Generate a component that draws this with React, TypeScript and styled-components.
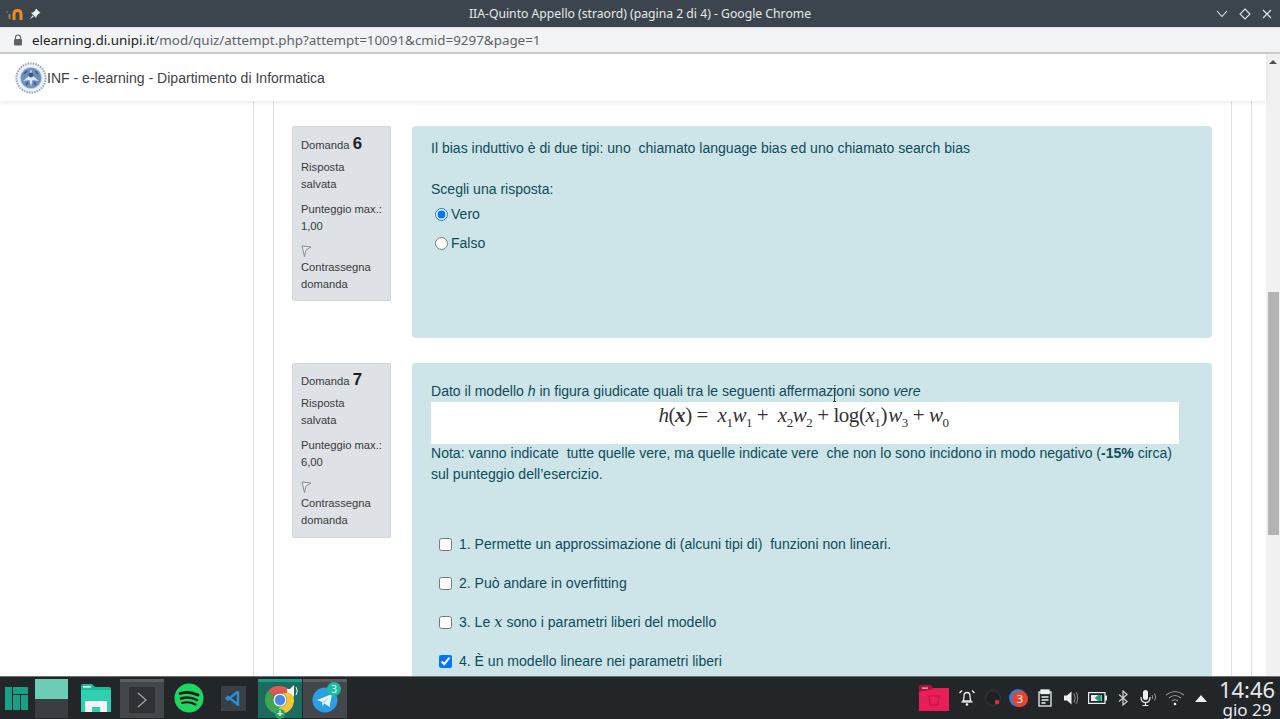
import React from 'react'
import styled, { createGlobalStyle } from 'styled-components'

const GlobalStyle = createGlobalStyle`
    html, body {
        margin: 0;
        padding: 0;
        height: 100%;
        overflow: hidden;
        background: #fff;
    }
    * {
        box-sizing: border-box;
    }
`

const questionSix = ['Vero', 'Falso']
const questionSeven = [
    { text: <>1. Permette un approssimazione di (alcuni tipi di)&nbsp; funzioni non lineari.</>, checked: false },
    { text: <>2. Può andare in overfitting</>, checked: false },
    { text: <>3. Le <MathVar>x</MathVar> sono i parametri liberi del modello</>, checked: false },
    { text: <>4. È un modello lineare nei parametri liberi</>, checked: true },
]

function MathVar({ children }: { children: React.ReactNode }) {
    return <MathItalic>{children}</MathItalic>
}

const Flag = () => (
    <svg width="11" height="12" viewBox="0 0 11 12" fill="none">
        <path d="M1 1 L10 2 L5 5 L3.5 11.5 Z" stroke="#8a8d90" strokeWidth="1" fill="#e9eaec" />
    </svg>
)

const QuestionInfo = ({ number, max, top }: { number: number; max: string; top: number }) => (
    <Info $top={top}>
        <InfoTitle>Domanda <InfoNumber>{number}</InfoNumber></InfoTitle>
        <InfoBlock>Risposta<br />salvata</InfoBlock>
        <InfoBlock>Punteggio max.:<br />{max}</InfoBlock>
        <FlagRow><Flag /></FlagRow>
        <div>Contrassegna<br />domanda</div>
    </Info>
)

const Seal = () => (
    <svg width="32" height="32" viewBox="0 0 32 32">
        <circle cx="16" cy="16" r="15.5" fill="#eef1f6" />
        <circle cx="16" cy="16" r="14.6" fill="none" stroke="#8ea3c4" strokeWidth="2" strokeDasharray="1.4 1.2" />
        <circle cx="16" cy="16" r="10.5" fill="#6f8dbb" />
        <circle cx="16" cy="16" r="10.5" fill="none" stroke="#b6c5dc" strokeWidth="1.2" strokeDasharray="1 1" />
        <path d="M16 7 L18 14 L24 19 L17.5 18 L16 25 L14.5 18 L8 19 L14 14 Z" fill="#dfe6f0" />
        <circle cx="16" cy="13" r="2.4" fill="#2f5792" />
        <path d="M9 12 L12 9 M23 12 L20 9 M11 23 L13 20 M21 23 L19 20" stroke="#34598f" strokeWidth="1.4" />
    </svg>
)

const ManjaroLogo = () => (
    <svg width="23" height="23" viewBox="0 0 23 23" fill="#16a085">
        <rect x="0" y="0" width="7" height="23" />
        <rect x="8" y="0" width="15" height="7" />
        <rect x="8" y="8" width="7" height="15" />
        <rect x="16" y="8" width="7" height="15" />
    </svg>
)

const FilesIcon = () => (
    <svg width="32" height="32" viewBox="0 0 32 32">
        <path d="M1 4 Q1 2 3 2 L12 2 L15 5 L29 5 Q31 5 31 7 L31 30 L1 30 Z" fill="#1abc9c" />
        <rect x="1" y="8" width="30" height="22" fill="#2fd0b0" />
        <rect x="3" y="4" width="8" height="1.6" fill="#dff7f1" />
        <path d="M5 30 L5 19 L27 19 L27 30 L20 30 L20 25 L12 25 L12 30 Z" fill="#f2f4f5" />
    </svg>
)

const ChromeIcon = () => (
    <svg width="30" height="30" viewBox="0 0 30 30">
        <path d="M15 1 A14 14 0 0 1 27.1 8 L15 8 A7 7 0 0 0 8.9 11.5 L3 6 A14 14 0 0 1 15 1 Z" fill="#e2574c" />
        <path d="M3 6 L8.9 11.5 A7 7 0 0 0 15 22 L9.5 28 A14 14 0 0 1 3 6 Z" fill="#3fa650" />
        <path d="M27.1 8 A14 14 0 0 1 9.5 28 L15 22 A7 7 0 0 0 15 8 Z" fill="#f6c533" />
        <circle cx="15" cy="15" r="6.6" fill="#fff" />
        <circle cx="15" cy="15" r="5.2" fill="#4a86e8" />
    </svg>
)

const TelegramIcon = () => (
    <svg width="26" height="26" viewBox="0 0 26 26">
        <circle cx="13" cy="13" r="12.5" fill="#2a9fe4" />
        <path d="M5 13 L20 7 L17.5 20 L12.5 16.5 L10.5 19 L10 15 Z" fill="#e8f5fc" />
        <path d="M10 15 L17 10 L12.5 16.5 Z" fill="#bcdcf0" />
    </svg>
)

const TrayIcons = () => (
    <Tray>
        <TrashFolder>
            <svg width="30" height="26" viewBox="0 0 30 26">
                <path d="M0 2 Q0 0 2 0 L11 0 L14 3 L30 3 L30 26 L0 26 Z" fill="#e91e57" />
                <path d="M0 0 L12 0 L14 4 L0 7 Z" fill="#a8123c" />
                <rect x="3" y="2.5" width="6" height="1.2" fill="#f4c6d4" />
                <path d="M10 11 L20 11 L19 20 L11 20 Z" fill="none" stroke="#bc1745" strokeWidth="1.2" />
            </svg>
        </TrashFolder>
        <TraySlot>
            <svg width="18" height="18" viewBox="0 0 18 18" fill="none" stroke="#eceff1" strokeWidth="1.3">
                <path d="M5 12 Q6 10 6 7 Q6 3.5 9 3.5 Q12 3.5 12 7 Q12 10 13 12 Z" />
                <path d="M3.5 13 L14.5 13" />
                <path d="M1.5 4 L4 1.5 M16.5 4 L14 1.5" />
                <circle cx="9" cy="15.5" r="1.3" fill="#eceff1" stroke="none" />
            </svg>
        </TraySlot>
        <TraySlot>
            <svg width="18" height="18" viewBox="0 0 18 18">
                <circle cx="9" cy="9" r="7.5" fill="#1f2124" stroke="#2e3134" strokeWidth="1.5" />
                <circle cx="13" cy="13" r="2.2" fill="#d63340" />
            </svg>
        </TraySlot>
        <TraySlot>
            <svg width="20" height="20" viewBox="0 0 20 20">
                <circle cx="9" cy="10" r="9" fill="#2f7fd6" />
                <circle cx="11" cy="11" r="8" fill="#e8432e" />
                <text x="11" y="15" fontSize="11" textAnchor="middle" fill="#fff" fontFamily="Noto Sans, sans-serif">3</text>
            </svg>
        </TraySlot>
        <TraySlot>
            <svg width="14" height="18" viewBox="0 0 14 18" fill="none" stroke="#eceff1" strokeWidth="1.3">
                <rect x="1" y="3" width="12" height="14" />
                <rect x="3" y="1" width="8" height="3.5" fill="#eceff1" />
                <path d="M3.5 8 L10.5 8 M3.5 11 L10.5 11 M3.5 14 L7.5 14" />
            </svg>
        </TraySlot>
        <TraySlot>
            <svg width="16" height="16" viewBox="0 0 16 16">
                <path d="M1 5.5 L4 5.5 L8.5 1.5 L8.5 14.5 L4 10.5 L1 10.5 Z" fill="#eceff1" />
                <path d="M11 3.5 Q13.5 8 11 12.5 M13 2 Q16.5 8 13 14" fill="none" stroke="#8a8d90" strokeWidth="1" />
            </svg>
        </TraySlot>
        <TraySlot>
            <svg width="19" height="12" viewBox="0 0 19 12">
                <rect x="0.6" y="0.6" width="16.4" height="10.8" fill="none" stroke="#eceff1" strokeWidth="1.2" />
                <rect x="17" y="3.5" width="2" height="5" fill="#eceff1" />
                <rect x="3" y="3" width="11" height="6" fill="#eceff1" />
                <path d="M11 2.5 L6.5 6 L11 9.5 Z" fill="#1d9e7e" />
                <rect x="10" y="3" width="3.5" height="6" fill="#1d9e7e" />
            </svg>
        </TraySlot>
        <TraySlot>
            <svg width="10" height="16" viewBox="0 0 10 16" fill="none" stroke="#c9cdd0" strokeWidth="1.3">
                <path d="M1 4.5 L9 11.5 L5 15 L5 1 L9 4.5 L1 11.5" />
            </svg>
        </TraySlot>
        <TraySlot>
            <svg width="18" height="18" viewBox="0 0 18 18" fill="none">
                <rect x="3" y="1" width="5" height="10" rx="2.5" fill="#eceff1" />
                <path d="M1 8 Q1 13.5 5.5 13.5 Q10 13.5 10 8 M5.5 13.5 L5.5 16.5 M2.5 16.5 L8.5 16.5" stroke="#eceff1" strokeWidth="1.2" />
                <path d="M12 6 Q13.5 8 12 10 M14.5 4.5 Q17 8 14.5 11.5" stroke="#9a9ea1" strokeWidth="1" />
            </svg>
        </TraySlot>
        <TraySlot>
            <svg width="20" height="16" viewBox="0 0 20 16" fill="none" stroke="#8f9396" strokeWidth="1.2">
                <path d="M1 5 Q10 -2 19 5" />
                <path d="M4 8 Q10 3 16 8" />
                <path d="M7 11 Q10 8.5 13 11" />
                <circle cx="10" cy="14" r="1.3" fill="#eceff1" stroke="none" />
            </svg>
        </TraySlot>
        <TraySlot>
            <svg width="12" height="7" viewBox="0 0 12 7">
                <path d="M6 0 L12 7 L0 7 Z" fill="#eceff1" />
            </svg>
        </TraySlot>
    </Tray>
)

const App: React.FunctionComponent = () => (
    <Screen>
        <GlobalStyle />
        <TitleBar>
            <TitleLeft>
                <MoodleMark>
                    <svg width="18" height="12" viewBox="0 0 18 12" fill="none">
                        <path d="M1 4 L3 4" stroke="#a07a50" strokeWidth="1.2" />
                        <path d="M4.5 11 L4.5 6" stroke="#b07c42" strokeWidth="2" />
                        <path d="M9 12 L9 6 Q9 2.5 12.5 2.5 Q16 2.5 16 6 L16 12" stroke="#f08a24" strokeWidth="3" />
                    </svg>
                </MoodleMark>
                <svg width="12" height="12" viewBox="0 0 12 12" fill="#eceff1">
                    <path d="M7 0.5 L11.5 5 L9.8 5.6 L7.6 8 L7.2 10 L2 4.8 L4 4.4 L6.4 2.2 Z" />
                    <path d="M3.6 7.2 L0.8 11.2 L4.8 8.4 Z" />
                </svg>
            </TitleLeft>
            <TitleText>IIA-Quinto Appello (straord) (pagina 2 di 4) - Google Chrome</TitleText>
            <WindowControls>
                <svg width="12" height="8" viewBox="0 0 12 8" fill="none" stroke="#e3e6e8" strokeWidth="1.1">
                    <path d="M1 1 L6 6.5 L11 1" />
                </svg>
                <svg width="12" height="12" viewBox="0 0 12 12" fill="none" stroke="#e3e6e8" strokeWidth="1.1">
                    <path d="M6 1 L11 6 L6 11 L1 6 Z" />
                </svg>
                <svg width="10" height="10" viewBox="0 0 10 10" fill="none" stroke="#e3e6e8" strokeWidth="1.1">
                    <path d="M1 1 L9 9 M9 1 L1 9" />
                </svg>
            </WindowControls>
        </TitleBar>
        <UrlBar>
            <svg width="10" height="12" viewBox="0 0 10 12">
                <path d="M2.5 5 L2.5 3.5 Q2.5 1 5 1 Q7.5 1 7.5 3.5 L7.5 5" fill="none" stroke="#5f6368" strokeWidth="1.2" />
                <rect x="1" y="5" width="8" height="6.5" rx="1" fill="#5f6368" />
            </svg>
            <UrlText>elearning.di.unipi.it<UrlPath>/mod/quiz/attempt.php?attempt=10091&amp;cmid=9297&amp;page=1</UrlPath></UrlText>
        </UrlBar>
        <Browser>
            <Viewport>
                <SiteHeader>
                    <Seal />
                    <SiteName>INF - e-learning - Dipartimento di Informatica</SiteName>
                </SiteHeader>
                <Page>
                    <OuterColumn>
                        <InnerColumn>
                            <Question>
                                <QuestionInfo number={6} max="1,00" top={8} />
                                <Content $height={212} $top={12}>
                                    <Paragraph>Il bias induttivo è di due tipi: uno&nbsp; chiamato language bias ed uno chiamato search bias</Paragraph>
                                    <Prompt>Scegli una risposta:</Prompt>
                                    {questionSix.map((answer, i) => (
                                        <RadioRow key={answer}>
                                            <input type="radio" name="q6" defaultChecked={i === 0} />
                                            {answer}
                                        </RadioRow>
                                    ))}
                                </Content>
                            </Question>
                            <Question>
                                <QuestionInfo number={7} max="6,00" top={7} />
                                <Content $height={400} $top={18}>
                                    <Paragraph>Dato il modello <em>h</em> in figura giudicate quali tra le seguenti affermazioni sono <em>vere</em></Paragraph>
                                    <FormulaBox>
                                        <Formula>
                                            <i>h</i>(<b><i>x</i></b>) =&nbsp; <i>x</i><sub>1</sub><i>w</i><sub>1</sub> +&nbsp; <i>x</i><sub>2</sub><i>w</i><sub>2</sub> + log(<i>x</i><sub>1</sub>)&#8202;<i>w</i><sub>3</sub> + <i>w</i><sub>0</sub>
                                        </Formula>
                                    </FormulaBox>
                                    <Note>
                                        Nota: vanno indicate&nbsp; tutte quelle vere, ma quelle indicate vere&nbsp; che non lo sono incidono in modo negativo (<strong>-15%</strong> circa) sul punteggio dell’esercizio.
                                    </Note>
                                    <Options>
                                        {questionSeven.map((option, i) => (
                                            <OptionRow key={i}>
                                                <input type="checkbox" defaultChecked={option.checked} />
                                                <span>{option.text}</span>
                                            </OptionRow>
                                        ))}
                                    </Options>
                                    <TextCursor />
                                </Content>
                            </Question>
                        </InnerColumn>
                    </OuterColumn>
                </Page>
            </Viewport>
            <Scrollbar>
                <ScrollArrow />
                <ScrollThumb />
            </Scrollbar>
        </Browser>
        <Taskbar>
            <StartButton><ManjaroLogo /></StartButton>
            <Pager>
                <PagerDesk $active />
                <PagerDesk />
            </Pager>
            <LauncherSlot $width={52} $shift={4}><FilesIcon /></LauncherSlot>
            <TaskButton $width={44}>
                <TerminalIcon>
                    <svg width="10" height="16" viewBox="0 0 10 16" fill="none" stroke="#9aa0a4" strokeWidth="1.4">
                        <path d="M1 1 L9 8 L1 15" />
                    </svg>
                </TerminalIcon>
            </TaskButton>
            <LauncherSlot $width={47}>
                <svg width="30" height="30" viewBox="0 0 30 30" fill="none">
                    <circle cx="15" cy="15" r="14.5" fill="#1ed760" />
                    <path d="M6 10.5 Q15 7.5 24 12" stroke="#16191b" strokeWidth="2.8" strokeLinecap="round" />
                    <path d="M7 15.5 Q15 13 23 17" stroke="#16191b" strokeWidth="2.4" strokeLinecap="round" />
                    <path d="M8 20 Q15 18 21.5 21.5" stroke="#16191b" strokeWidth="2" strokeLinecap="round" />
                </svg>
            </LauncherSlot>
            <LauncherSlot $width={46} $shift={-4}>
                <CodeTile>
                    <svg width="16" height="16" viewBox="0 0 16 16" fill="none" stroke="#2b8ed8" strokeWidth="2.4">
                        <path d="M13 1.5 L13 14.5 L3 7 L1 8.5 M13 1.5 L3 9.5 L1 8" />
                    </svg>
                </CodeTile>
            </LauncherSlot>
            <TaskButton $width={44} $active>
                <ChromeIcon />
                <SoundBadge>
                    <svg width="12" height="14" viewBox="0 0 12 14">
                        <path d="M0 5 L3 5 L7 1 L7 13 L3 9 L0 9 Z" fill="#f4f5f6" />
                        <path d="M9 3 Q11.5 7 9 11" fill="none" stroke="#f4f5f6" strokeWidth="1" />
                    </svg>
                </SoundBadge>
                <PlusBadge>+</PlusBadge>
            </TaskButton>
            <TaskButton $width={44}>
                <TelegramIcon />
                <CountBadge>3</CountBadge>
            </TaskButton>
            <TaskbarSpacer />
            <TrayIcons />
            <Clock>
                <ClockTime>14:46</ClockTime>
                <ClockDate>gio 29</ClockDate>
            </Clock>
        </Taskbar>
    </Screen>
)

export default App

const Screen = styled.div`
    display: flex;
    flex-direction: column;
    width: 1280px;
    height: 719px;
    overflow: hidden;
    font-family: "Liberation Sans", Arial, sans-serif;
`

const TitleBar = styled.div`
    display: flex;
    flex: 0 0 27px;
    align-items: center;
    position: relative;
    justify-content: space-between;
    padding: 0 5px;
    background: #3c454d;
`

const TitleLeft = styled.div`
    display: flex;
    align-items: center;
    gap: 6px;
`

const MoodleMark = styled.div`
    display: flex;
    width: 18px;
`

const TitleText = styled.div`
    position: absolute;
    left: 0;
    right: 0;
    text-align: center;
    font: 12.2px "Noto Sans", sans-serif;
    color: #e6e9eb;
    pointer-events: none;
`

const WindowControls = styled.div`
    display: flex;
    align-items: center;
    gap: 11px;
    padding-right: 3px;
`

const UrlBar = styled.div`
    display: flex;
    flex: 0 0 27px;
    align-items: center;
    gap: 9px;
    padding-left: 13px;
    background: #f1f3f4;
    border-top: 1px solid #e3e7ea;
    border-bottom: 2px solid #c9cbcc;
`

const UrlText = styled.div`
    font: 13.4px "Noto Sans", sans-serif;
    color: #202124;
`

const UrlPath = styled.span`
    color: #5f6368;
`

const Browser = styled.div`
    display: flex;
    flex: 1;
    min-height: 0;
`

const Viewport = styled.div`
    display: flex;
    flex-direction: column;
    flex: 1;
    min-width: 0;
`

const SiteHeader = styled.div`
    display: flex;
    flex: 0 0 47px;
    align-items: center;
    padding-left: 15px;
    background: #fff;
    box-shadow: 0 2px 4px rgba(0, 0, 0, 0.08);
    position: relative;
    z-index: 1;
`

const SiteName = styled.div`
    font-size: 14.05px;
    color: #3f4347;
`

const Page = styled.div`
    flex: 1;
    min-height: 0;
    overflow: hidden;
    padding-left: 253px;
    background: #fff;
`

const OuterColumn = styled.div`
    width: 999px;
    height: 100%;
    padding: 0 19px;
    border-left: 1px solid #dee2e6;
    border-right: 1px solid #dee2e6;
`

const InnerColumn = styled.div`
    height: 100%;
    padding: 25px 18px 0;
    border-left: 1px solid #dee2e6;
    border-right: 1px solid #dee2e6;
`

const Question = styled.div`
    display: flex;
    align-items: flex-start;
    gap: 21px;
    margin-bottom: 25px;
`

const Info = styled.div<{ $top: number }>`
    flex: 0 0 99px;
    height: 175px;
    padding: ${({ $top }) => $top}px 8px 0;
    font-size: 11.2px;
    line-height: 17px;
    color: #373a3c;
    background: #dee2e6;
    border: 1px solid #d2d5d9;
    border-radius: 2px;
`

const InfoTitle = styled.div`
    height: 18px;
    margin-bottom: 6px;
`

const InfoNumber = styled.span`
    font-size: 16.8px;
    font-weight: bold;
    color: #1d2125;
`

const InfoBlock = styled.div`
    margin-bottom: 8px;
`

const FlagRow = styled.div`
    display: flex;
    height: 16px;
    align-items: center;
`

const Content = styled.div<{ $height: number; $top: number }>`
    position: relative;
    flex: 0 0 800px;
    height: ${({ $height }) => $height}px;
    padding: ${({ $top }) => $top}px 33px 0 19px;
    font-size: 14.04px;
    line-height: 21px;
    color: #0f4c58;
    background: #cde5e9;
    border-radius: 4px;
`

const Paragraph = styled.div`
    white-space: nowrap;
`

const Prompt = styled.div`
    margin-top: 20px;
`

const RadioRow = styled.label`
    display: flex;
    align-items: center;
    height: 29px;
    padding-left: 4px;
    gap: 3px;

    input {
        margin: 0;
        width: 13px;
        height: 13px;
    }
`

const FormulaBox = styled.div`
    display: flex;
    justify-content: center;
    align-items: center;
    height: 42px;
    width: 748px;
    background: #fff;
`

const Formula = styled.div`
    font-family: "Liberation Serif", serif;
    font-size: 21px;
    line-height: 30px;
    color: #333;
    white-space: nowrap;
    margin-bottom: 17px;
    margin-right: 3px;
    letter-spacing: -0.45px;

    sub {
        font-size: 13px;
        line-height: 0;
    }
`

const Note = styled.div`
    margin-top: -1px;
`

const Options = styled.div`
    margin-top: 40px;
`

const OptionRow = styled.label`
    display: flex;
    align-items: center;
    height: 39px;
    padding-left: 8px;
    gap: 7px;

    input {
        margin: 0;
        width: 13px;
        height: 13px;
    }
`

const MathItalic = styled.i`
    font-family: "DejaVu Serif", serif;
    font-size: 15px;
`

const TextCursor = styled.div`
    position: absolute;
    left: 422px;
    top: 25px;
    width: 1px;
    height: 14px;
    background: #3a3a3a;

    &::before,
    &::after {
        content: "";
        position: absolute;
        left: -1px;
        width: 3px;
        height: 1px;
        background: #3a3a3a;
    }

    &::before {
        top: 0;
    }

    &::after {
        bottom: 0;
    }
`

const Scrollbar = styled.div`
    display: flex;
    flex-direction: column;
    align-items: center;
    flex: 0 0 14px;
    background: #f1f1f1;
`

const ScrollArrow = styled.div`
    margin-top: 6px;
    width: 0;
    height: 0;
    border-left: 4px solid transparent;
    border-right: 4px solid transparent;
    border-bottom: 4px solid #505050;
`

const ScrollThumb = styled.div`
    align-self: flex-end;
    width: 11px;
    height: 243px;
    margin-top: 228px;
    margin-right: 1px;
    background: #b3b3b3;
`

const Taskbar = styled.div`
    display: flex;
    flex: 0 0 43px;
    align-items: stretch;
    background: #232629;
    border-top: 1px solid #6b6f72;
`

const StartButton = styled.div`
    display: flex;
    flex: 0 0 35px;
    align-items: center;
    justify-content: center;
    padding: 1px 7px 0 5px;
`

const Pager = styled.div`
    display: flex;
    flex: 0 0 33px;
    flex-direction: column;
    padding-top: 2px;
    height: 41px;
`

const PagerDesk = styled.div<{ $active?: boolean }>`
    flex: 1;
    background: ${({ $active }) => ($active ? '#6ecdb6' : '#3a3e42')};
`

const LauncherSlot = styled.div<{ $width: number; $shift?: number }>`
    display: flex;
    flex: 0 0 ${({ $width }) => $width}px;
    align-items: center;
    justify-content: center;
    padding-left: ${({ $shift = 0 }) => Math.max($shift, 0)}px;
    padding-right: ${({ $shift = 0 }) => Math.max(-$shift, 0)}px;
`

const TaskButton = styled.div<{ $width: number; $active?: boolean }>`
    display: flex;
    position: relative;
    flex: 0 0 ${({ $width }) => $width}px;
    align-items: center;
    justify-content: center;
    margin-right: 1px;
    margin-top: 2px;
    margin-bottom: 1px;
    background: ${({ $active }) => ($active ? '#1c6b60' : '#43474b')};
    border-top: 3px solid ${({ $active }) => ($active ? '#16a085' : '#5a5e62')};
`

const TerminalIcon = styled.div`
    display: flex;
    align-items: center;
    justify-content: center;
    width: 26px;
    height: 26px;
    background: #2f3235;
`

const CodeTile = styled.div`
    display: flex;
    align-items: center;
    justify-content: center;
    width: 25px;
    height: 25px;
    background: #3a3f45;
`

const SoundBadge = styled.div`
    position: absolute;
    top: 2px;
    right: 3px;
    display: flex;
`

const PlusBadge = styled.div`
    position: absolute;
    bottom: -1px;
    left: 17px;
    width: 10px;
    height: 10px;
    border-radius: 50%;
    background: #27a567;
    color: #fff;
    font: bold 10px/10px "Liberation Sans", sans-serif;
    text-align: center;
`

const CountBadge = styled.div`
    position: absolute;
    top: 0;
    right: 6px;
    width: 14px;
    height: 14px;
    border-radius: 50%;
    background: #1abc9c;
    color: #e9fff8;
    font: 10px/14px "Noto Sans", sans-serif;
    text-align: center;
`

const TaskbarSpacer = styled.div`
    flex: 1;
`

const Tray = styled.div`
    display: flex;
    align-items: center;
`

const TrashFolder = styled.div`
    display: flex;
    flex: 0 0 35px;
    align-items: center;
`

const TraySlot = styled.div`
    display: flex;
    flex: 0 0 26px;
    align-items: center;
    justify-content: center;
`

const Clock = styled.div`
    display: flex;
    flex: 0 0 66px;
    flex-direction: column;
    align-items: center;
    font-family: "Noto Sans", sans-serif;
    color: #e6e9eb;
`

const ClockTime = styled.div`
    font-size: 22px;
    line-height: 22px;
    margin-top: 1px;
`

const ClockDate = styled.div`
    font-size: 17px;
    line-height: 17px;
    margin-top: 1px;
`
